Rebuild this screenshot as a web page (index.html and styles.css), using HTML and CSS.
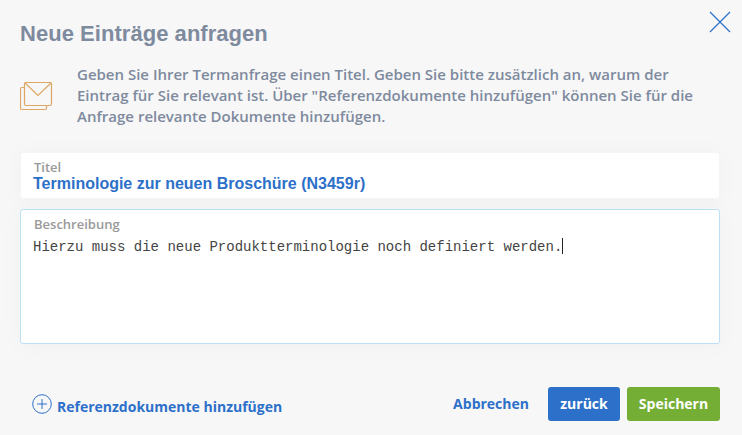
FILE: index.html
```html
<!DOCTYPE html>
<html lang="de">
<head>
<meta charset="utf-8">
<title>Neue Einträge anfragen</title>
<link rel="stylesheet" href="styles.css">
</head>
<body>
<main class="dialog">
  <button class="close" aria-label="Schließen">
    <svg width="22" height="22" viewBox="0 0 22 22"><path d="M1 1 21 21M21 1 1 21"/></svg>
  </button>
  <h1 class="heading">Neue Einträge anfragen</h1>
  <section class="intro">
    <svg class="mail" width="34" height="30" viewBox="0 0 34 30">
      <path d="M4.500 5.500H2Q.5 5.500 .5 7V26Q.5 27.500 2 27.500H25Q26.500 27.500 26.500 26V24"/>
      <rect x="4.500" y=".5" width="27" height="23" rx="1.500"/>
      <path d="M5 1 18 13.500 31 1"/>
    </svg>
    <p class="text">Geben Sie Ihrer Termanfrage einen Titel. Geben Sie bitte zusätzlich an, warum der<br>Eintrag für Sie relevant ist. Über "Referenzdokumente hinzufügen" können Sie für die<br>Anfrage relevante Dokumente hinzufügen.</p>
  </section>
  <section class="field field-title">
    <div class="label">Titel</div>
    <div class="title-value">Terminologie zur neuen Broschüre (N3459r)</div>
  </section>
  <section class="field field-description">
    <div class="label">Beschreibung</div>
    <div class="description-value">Hierzu muss die neue Produktterminologie noch definiert werden.<span class="caret"></span></div>
  </section>
  <footer class="footer">
    <a class="add">
      <svg width="20" height="20" viewBox="0 0 20 20"><circle cx="10" cy="10" r="9.300"/><path d="M5 10H15M10 5V15"/></svg>
      <span class="add-label">Referenzdokumente hinzufügen</span>
    </a>
    <a class="cancel">Abbrechen</a>
    <button class="button back">zurück</button>
    <button class="button save">Speichern</button>
  </footer>
</main>
</body>
</html>
```
FILE: styles.css
```css
* { box-sizing: border-box; }
body {
  margin: 0;
  background: #f7f7f7;
  font-family: "Open Sans", sans-serif;
  overflow: hidden;
}
.dialog {
  position: relative;
  height: 435px;
  padding: 18px 22px 0 20px;
  display: flex;
  flex-direction: column;
}
.close {
  position: absolute;
  top: 11px;
  right: 11px;
  width: 22px;
  height: 22px;
  padding: 0;
  border: 0;
  background: none;
}
svg { display: block; fill: none; flex: none; }
.close svg { stroke: #2d70c9; stroke-width: 1.2; }
.heading {
  margin: 0;
  font: bold 22px/31px "Liberation Sans", sans-serif;
  letter-spacing: .04px;
  color: #7e8a9e;
}
.intro {
  display: flex;
  margin-top: 15px;
  height: 88px;
}
.mail { margin: 18px 23px 0 0; stroke: #dfa765; stroke-width: 1.2; }
.text {
  margin: 0;
  font-size: 15px;
  font-weight: 600;
  line-height: 21px;
  white-space: nowrap;
  color: #7e8a9e;
}
.field {
  background: #fff;
  border-radius: 3px;
  box-shadow: 0 2px 24px rgba(0, 0, 0, .03);
}
.field-title {
  height: 47px;
  padding: 7px 13px 0;
  margin-top: 0;
  border: 1px solid #f5f5f5;
}
.field-description {
  height: 135px;
  margin-top: 10px;
  padding: 5px 12px 0;
  border: 1px solid #bce1f7;
}
.label {
  padding-left: 1px;
  font-size: 13px;
  font-weight: 600;
  line-height: 18px;
  color: #999;
}
.field-title .label { line-height: 15px; margin-left: -1px; }
.title-value {
  margin-left: -1px;
  font: bold 16px/18px "Liberation Sans", sans-serif;
  color: #2d70c9;
}
.description-value {
  display: flex;
  margin-top: 5px;
  font: 14px/19px "Courier", "Courier New", "Liberation Mono", monospace;
  color: #444;
}
.caret { width: 1px; height: 16px; background: #222; }
.footer {
  display: flex;
  align-items: center;
  height: 34px;
  margin-top: 43px;
  font-size: 14px;
  font-weight: 700;
}
.add {
  display: flex;
  gap: 5px;
  margin: 0 auto 0 12px;
  color: #2d70c9;
}
.add svg { stroke: #2d70c9; stroke-width: 1; }
.add-label { line-height: 20px; padding-top: 3px; margin-bottom: -3px; }
.cancel { color: #2d70c9; margin: -2px 19px 0 0; }
.button {
  height: 34px;
  padding: 0 0 1px;
  border: 0;
  border-radius: 3px;
  font: inherit;
  color: #fff;
}
.back { width: 72px; margin-right: 7px; background: #2d70c9; }
.save { width: 93px; background: #74ae35; }
```
